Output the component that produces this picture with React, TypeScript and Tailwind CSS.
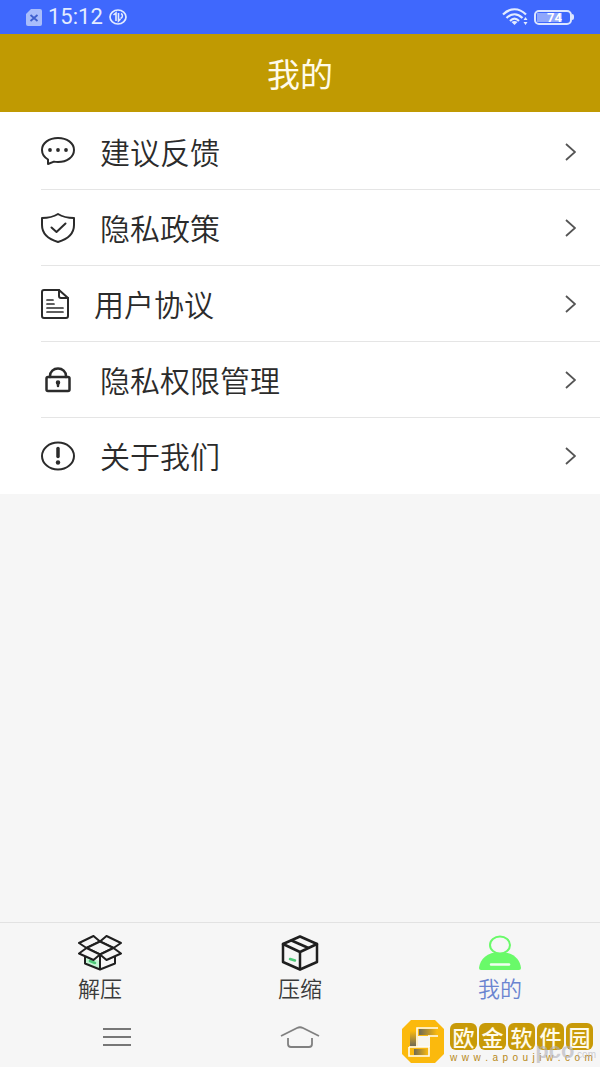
import React, { useState } from "react";

const stroke = {
  fill: "none",
  stroke: "#2b2b2b",
  strokeWidth: 2,
  strokeLinecap: "round" as const,
  strokeLinejoin: "round" as const,
};

function ChatIcon() {
  return (
    <svg width="34" height="30" viewBox="0 0 34 30" {...stroke}>
      <path d="M7 22.500C3.400 20.300 1 16.900 1 13 1 6 8 1 17 1s16 5 16 12-7 12-16 12c-1.500 0-2.800-.1-4-.4L7 27z" />
      <g fill="#2b2b2b" stroke="none">
        <circle cx="9" cy="13" r="1.900" />
        <circle cx="17" cy="13" r="1.900" />
        <circle cx="25" cy="13" r="1.900" />
      </g>
    </svg>
  );
}

function ShieldIcon() {
  return (
    <svg width="34" height="30" viewBox="0 0 34 30" {...stroke}>
      <path d="M17 1c4 2.500 9 4 16 4v7c0 8-6 14-16 17C7 26 1 20 1 12V5c7 0 12-1.500 16-4z" />
      <path d="M10.500 14.500l5 4.500 9-8.500" />
    </svg>
  );
}

function DocIcon() {
  return (
    <svg width="28" height="30" viewBox="0 0 28 30" {...stroke}>
      <path d="M3 1h15l9 8v18q0 2-2 2H3q-2 0-2-2V3q0-2 2-2z" />
      <path d="M18 1v6q0 2 2 2h7" />
      <path d="M6 11h6M6 15h7M6 19h16M6 23h16" strokeWidth="1.700" />
    </svg>
  );
}

function LockIcon() {
  return (
    <svg width="34" height="26" viewBox="0 0 34 26" {...stroke} strokeWidth="2.500">
      <path d="M9 10V9c0-4.500 3.500-7.500 8-7.500S25 4.500 25 9v1" />
      <rect x="5.500" y="10" width="23" height="14" rx="1.500" />
      <circle cx="17" cy="15.500" r="1.500" fill="#2b2b2b" strokeWidth="1.500" />
      <path d="M17 16v3" />
    </svg>
  );
}

function AboutIcon() {
  return (
    <svg width="34" height="30" viewBox="0 0 34 30" {...stroke}>
      <ellipse cx="17" cy="15" rx="16" ry="13.500" />
      <path d="M17 7.500v8" strokeWidth="3.500" />
      <circle cx="17" cy="21.500" r="2.200" fill="#2b2b2b" stroke="none" />
    </svg>
  );
}

function OpenBoxIcon() {
  return (
    <svg width="44" height="36" viewBox="0 0 44 36" {...stroke} stroke="#1f1f1f">
      <path d="M8 22l14 4v8L8 28z" fill="#c5f5d5" stroke="none" />
      <path d="M12 26l5 2" stroke="#4dc978" strokeWidth="2.500" />
      <path d="M7 22v6.500L22 34.500 37 28.500V22M22 20v14" />
      <path d="M22 6.500L15.500 1 1 8l7.500 5L22 6.500 35.500 13 43 8 28.500 1z" fill="#f6f6f6" />
      <path d="M22 6.500L8.500 13 22 19.500 35.500 13z" fill="#f6f6f6" />
      <path d="M8.500 13L1 18.500l14.500 6.500 6.500-5.500zM35.500 13l7.500 5.500L28.500 25 22 19.500z" fill="#f6f6f6" />
    </svg>
  );
}

function BoxIcon() {
  return (
    <svg width="38" height="36" viewBox="0 0 38 36" {...stroke} stroke="#1f1f1f" strokeWidth="2.500">
      <path d="M19 1.500L36 9v18l-17 7.500L2 27V9z" />
      <path d="M2 9l17 8 17-8M19 17v17M10.500 5.500L27.500 13" />
      <path d="M9 24l5 1.500" stroke="#4dc978" />
    </svg>
  );
}

function PersonIcon() {
  return (
    <svg width="44" height="36" viewBox="0 0 44 36">
      <path d="M1 33c1-9 8-16 21-16s20 7 21 16q0 2-2 2H3q-2 0-2-2z" fill="#69fa69" />
      <ellipse cx="22" cy="10" rx="10" ry="8.500" fill="#f6f6f6" stroke="#69fa69" strokeWidth="2" />
      <path d="M13 29.500h18" stroke="#efffef" strokeWidth="2.500" strokeLinecap="round" />
    </svg>
  );
}

const items = [
  { label: "建议反馈", icon: <ChatIcon /> },
  { label: "隐私政策", icon: <ShieldIcon /> },
  { label: "用户协议", icon: <DocIcon /> },
  { label: "隐私权限管理", icon: <LockIcon /> },
  { label: "关于我们", icon: <AboutIcon /> },
];

const tabs = [
  { label: "解压", icon: <OpenBoxIcon /> },
  { label: "压缩", icon: <BoxIcon /> },
  { label: "我的", icon: <PersonIcon /> },
];

function StatusBar() {
  return (
    <div className="flex h-[34px] items-center bg-[#3f68fd] px-[26px] text-[#e3ecff]">
      <svg width="16" height="17" viewBox="0 0 16 17">
        <path d="M5 0h9q2 0 2 2v13q0 2-2 2H2q-2 0-2-2V5z" fill="#a9bdfb" />
        <path d="M4.500 6l7 6M11.500 6l-7 6" stroke="#3f60ce" strokeWidth="1.800" />
      </svg>
      <span className="ml-1.5 font-[Roboto,sans-serif] text-[22px] leading-none">15:12</span>
      <svg className="ml-1.5" width="18" height="16" viewBox="0 0 18 16" fill="none" stroke="#e3ecff">
        <ellipse cx="9" cy="8" rx="8" ry="7" strokeWidth="1.700" />
        <path d="M4.500 6l2.500-2v8M9.500 4v8l2-2" strokeWidth="1.600" />
        <path d="M12 4.500c2 1 2 4-.5 5" strokeWidth="1.500" />
      </svg>
      <svg className="ml-auto" width="26" height="18" viewBox="0 0 26 18" fill="none" stroke="#e3ecff" strokeWidth="2.200">
        <path d="M1 6.500c7-7 16-7 23 0M4.500 10c5-5 11-5 16 0M8 13c3-3 6-3 9 0" />
        <path d="M9.500 14c2-1.500 4-1.500 6 0l-3 3z" fill="#e3ecff" stroke="none" />
        <path d="M23.500 9l2 3h-4zM23.500 17l2-3h-4z" fill="#e3ecff" stroke="none" />
      </svg>
      <div className="ml-1.5 flex h-[15px] w-[38px] items-center rounded-[5px] border-2 border-[#dce6ff] p-px">
        <div className="flex h-full w-[25px] items-center justify-end bg-[#8fa7fc]">
          <span className="font-[Roboto,sans-serif] text-[13px] font-bold leading-none text-white">74</span>
        </div>
      </div>
      <div className="h-1.5 w-0.5 rounded-r bg-[#dce6ff]" />
    </div>
  );
}

function Watermark() {
  return (
    <div className="absolute bottom-0 right-0 flex items-end gap-1.5 pr-[7px]">
      <svg width="42" height="47" viewBox="0 0 42 47">
        <defs>
          <linearGradient id="fadeX">
            <stop offset="0" stopColor="#6f6a55" />
            <stop offset="1" stopColor="#fbb90d" />
          </linearGradient>
          <linearGradient id="fadeY" x1="0" y1="0" x2="0" y2="1">
            <stop offset="0" stopColor="#fbb90d" />
            <stop offset="1" stopColor="#6f6a55" />
          </linearGradient>
        </defs>
        <path d="M9 0h24l9 9v25l-9 9H9l-9-9V9z" fill="#fbb90d" />
        <path d="M16 16h12v11H16z" fill="#f8f6ef" />
        <path d="M17 9h18v6H17z" fill="url(#fadeX)" />
        <path d="M8 11h6v15H8z" fill="url(#fadeY)" />
        <path d="M29 18h6v14h-6z" fill="#fbb90d" />
        <path d="M12 29h14v6H12z" fill="url(#fadeX)" />
        <path d="M36 8H15v19M7 27h20M27 26v10H7v-9M26 16h10" fill="none" stroke="#fffdf5" strokeWidth="1.600" />
      </svg>
      <div className="flex flex-col">
        <div className="flex gap-0.5 font-['Noto_Sans_CJK_SC',sans-serif] text-[22px] font-medium leading-[27px] text-[#fffbea]">
          {["欧", "金", "软", "件", "园"].map((char) => (
            <span key={char} className="w-[27px] rounded-md bg-[#c89a08] text-center">
              {char}
            </span>
          ))}
        </div>
        <div className="mt-0.5 flex justify-between pb-[3px] font-['Liberation_Sans',sans-serif] text-[10px] leading-3 text-[#b88920]">
          {"www.apoujiw.com".split("").map((char, i) => (
            <span key={i}>{char}</span>
          ))}
        </div>
      </div>
      {/* faded second stamp */}
      <div className="absolute bottom-1 right-1 flex items-baseline font-['Liberation_Sans',sans-serif] text-[#b0b0b8]/60">
        <span className="text-[22px] font-bold leading-6">pco</span>
        <span className="text-[10px]">.com</span>
      </div>
    </div>
  );
}

export default function App() {
  const [active, setActive] = useState("我的");

  return (
    <div className="relative flex min-h-screen flex-col bg-[#f6f6f6] font-['Noto_Sans_CJK_SC',sans-serif]">
      <StatusBar />
      <header className="flex h-[78px] items-center justify-center bg-[#c09a02] text-[#fffbea]">
        <h1 className="text-[33px] leading-10">我的</h1>
      </header>

      <ul className="bg-white pb-px pt-0.5">
        {items.map((item, i) => (
          <li key={item.label}>
            <button className="flex h-[75px] w-full items-center gap-[25px] pl-[41px] pr-6 text-left">
              {item.icon}
              <span className="flex-1 pb-0.5 text-[30px] font-[350] leading-9 text-[#2b2b2b]">{item.label}</span>
              <svg width="11" height="18" viewBox="0 0 11 18" fill="none" stroke="#555" strokeWidth="1.800">
                <path d="M1 1l9 8-9 8" />
              </svg>
            </button>
            {i < items.length - 1 && <div className="ml-[41px] h-px bg-[#e5e5e5]" />}
          </li>
        ))}
      </ul>

      <nav className="mt-auto grid grid-cols-3 border-t border-[#e2e2e2]">
        {tabs.map((tab) => (
          <button
            key={tab.label}
            onClick={() => setActive(tab.label)}
            className="flex flex-col items-center pb-1.5 pt-3"
          >
            {tab.icon}
            <span
              className={`mt-0.5 text-[22px] font-[350] leading-7 ${active === tab.label ? "text-[#6a84d0]" : "text-[#3a3a3a]"}`}
            >
              {tab.label}
            </span>
          </button>
        ))}
      </nav>

      {/* System navigation */}
      <div className="grid h-[60px] grid-cols-3 items-center">
        <button aria-label="Recents" className="flex justify-center pl-[34px]">
          <svg width="28" height="20" viewBox="0 0 28 20" stroke="#777" strokeWidth="1.800">
            <path d="M0 2h28M0 10h28M0 18h28" />
          </svg>
        </button>
        <button aria-label="Home" className="flex justify-center">
          <svg width="40" height="22" viewBox="0 0 40 22" fill="none" stroke="#808080" strokeWidth="1.800">
            <path d="M1 10L17 2q3-1.500 6 0l16 8M8 12v6q0 3 3 3h18q3 0 3-3v-6" />
          </svg>
        </button>
      </div>
      <Watermark />
    </div>
  );
}
